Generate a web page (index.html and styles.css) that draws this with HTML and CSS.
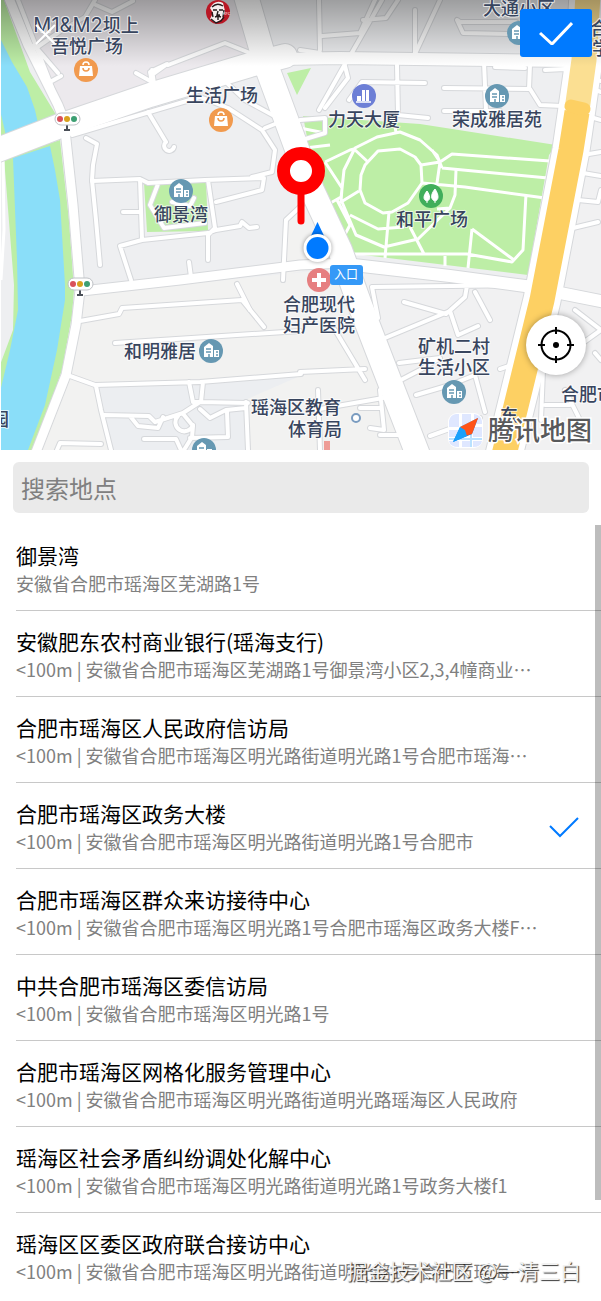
FILE: index.html
```html
<!DOCTYPE html>
<html lang="zh-CN">
<head>
<meta charset="utf-8">
<meta name="viewport" content="width=device-width, initial-scale=1">
<title>选择位置</title>
<link rel="stylesheet" href="styles.css">
</head>
<body>
<main class="page">
  <section class="map" aria-label="地图">
    <svg class="map-canvas" viewBox="0 0 601 450" preserveAspectRatio="xMidYMid slice">
      <defs>
        <g id="lanes">
          <path d="M18 0L50 82L61 76M50 82L58 105M26 45L36 48L62 30L85 17L95 0M96 5L112 12L133 1M34 45L58 73"/>
          <path d="M136 73L152 82L150 72L167 64L153 74M168 65L225 43L250 53M152 70L155 90"/>
          <path d="M72 135L200 97L228 108L262 130L275 150L272 172L252 177M148 112L166 142M86 138L97 144L93 165L92 180L96 220L100 265M166 142A5 5 0 1 0 174 147M228 84L245 100L278 118M265 128L280 122"/>
          <path d="M92 181L140 179L148 183L205 180L264 178L262 190L216 202M140 179L142 240L120 246L131 280M142 240L208 233L216 230L240 226L242 222L249 228L257 227M208 180L215 228L208 235L208 260M123 212L141 212M158 184L150 205L164 228L205 223M172 202L190 206L194 198"/>
          <path d="M283 280L286 220L302 205M189 262L191 277M237 284L250 310"/>
          <path d="M80 321L119 314L122 308L242 300L264 327M115 343L300 331M70 376L95 385L200 382L301 374M96 386L101 410L111 450M104 415L149 416L155 422L183 413L200 402L248 403M189 382L193 402L201 402L203 382M130 416L138 426L158 428L163 417M184 415L193 426L192 437L184 450M178 416A9 9 0 1 0 193 425M200 409L210 418L226 410L246 408M227 412L228 437L190 438M246 402L248 450M144 439L176 439L181 450M57 450L60 443L101 444"/>
          <path d="M319 0L320 50M322 36L360 33L375 0M350 56L382 0M398 0L386 18L363 20M415 54L440 0M415 10V54M300 50L320 53M457 20L463 33L516 34L516 22L460 22Z"/>
          <path d="M344 62L348 78L325 108M345 64L319 110M349 100L362 82L425 83M397 65L398 115L428 118M444 88L530 89L540 105L563 106M444 111L500 111M484 62L486 110M530 65L529 89M495 67L525 68"/>
          <path d="M300 120L325 118L325 133L302 140M545 70L565 69L575 75L601 81M590 88L601 92M587 116L601 120M583 155L601 152M583 173L601 176M578 200L598 202L601 190M573 228L598 222M594 0V60L601 62"/>
          <path d="M378 318L372 287L520 285M404 302L446 314L465 297L468 280M385 338L450 311L458 335L478 326M399 363L440 358L420 370L395 383M416 395L450 385L475 375L485 412M430 436L480 418M500 369L515 364M475 292L490 320M300 372L365 369M335 330L365 380M314 410L383 398M380 390L384 430L370 428M360 408H380M320 450L318 390M380 435L398 435M541 420L543 370L549 340M580 345L601 330M595 353L601 360M545 405H570M575 310L601 330M565 390L585 430"/>
        </g>
        <g id="streets">
          <path d="M8 -4L28 45L58 105L66 125"/>
          <path d="M65 130L73 205L80 290L76 325L66 375L36 452"/>
          <path d="M82 291L180 280L300 265L345 263"/>
        </g>
        <g id="avenues">
          <path d="M345 264L450 276L525 286L605 302"/>
          <path d="M280 59L340 58L570 61"/>
        </g>
        <g id="arterials">
          <path d="M-5 151L65 124L150 95L250 65L285 56"/>
          <path d="M246 -4L266 65L290 130L312 190L340 250L360 305L420 460"/>
        </g>
        <path id="highway" d="M588 -5L584 60L571 150L542 300L504 455"/>
        <g id="homes">
          <circle r="12" fill="#6698b2"/>
          <path d="M-7 6V-4L-2 -8L2 -5V6ZM3 -1H8V6H3Z" fill="#fff"/>
          <path d="M-5 -2H0M-5 1H0M-2 3V6M5 1H7M5 4H7" stroke="#6698b2" stroke-width="1.5"/>
        </g>
        <g id="shop">
          <circle r="12" fill="#f19a4e"/>
          <path d="M-6 -4H6L7 6H-7Z" fill="#fff"/>
          <path d="M-3 -5A3 3 0 0 1 3 -5" fill="none" stroke="#fff" stroke-width="1.5"/>
          <path d="M-3 -2A3 3 0 0 0 3 -2" fill="none" stroke="#f19a4e" stroke-width="1.5"/>
        </g>
        <g id="signal">
          <path d="M0 5V11M-3 11H3" stroke="#4a4f57" stroke-width="2"/>
          <rect x="-12" y="-6" width="25" height="12" rx="6" fill="#fff" stroke="#bfc2c6"/>
          <circle cx="-7" r="3" fill="#d9515a"/><circle r="3" fill="#d9a11d"/><circle cx="7" r="3" fill="#3d9f72"/>
        </g>
        <linearGradient id="shade" x2="0" y2="1">
          <stop offset="0" stop-opacity=".34"/><stop offset="1" stop-opacity="0"/>
        </linearGradient>
      </defs>

      <rect width="601" height="450" fill="#eeeff1"/>
      <path d="M10 0H240L260 60L65 122Z" fill="#ece9ed"/>
      <path d="M80 295L345 268L412 450H40L75 350ZM283 275L286 220L305 190L345 262Z" fill="#f2f2f1"/>
      <path d="M97 387L300 376L245 400V450H112Z" fill="#eceef1"/>
      <path d="M350 270L525 290L490 450H420ZM595 0H601V450H520Z" fill="#f1f1f2"/>

      <path class="grass" d="M0 0H4L30 72L58 118L0 140ZM4 158L60 140L69 220L74 290L72 315L62 370L34 450H0V365L13 330L14 285Z"/>
      <path class="water" d="M0 38L12 62L27 87L35 110L39 128L7 140L0 110ZM13 158L50 146L55 170L60 200L65 285L65 300L57 350L45 405L28 450H0V392L10 350L18 310L17 260Z"/>
      <path class="lane-white" d="M3 158L4 230L1 280"/>
      <path class="grass" d="M287 73L311 68L297 95ZM144 183L206 180L208 231L147 232ZM303 116L420 124L556 145L549 155L528 275L347 253L315 180Z"/>

      <g class="park-path">
        <path d="M365 165L378 151L400 149L415 157L421 165L422 183L408 203L392 212L383 213L365 203L360 190L361 175Z"/>
        <path d="M325 162L350 150L354 149L368 162M325 162L342 188L341 202L359 191M327 205L341 197M342 202L356 235L384 247L418 239L450 208L455 195L456 170M350 215L378 229L404 227M337 200L350 225L343 238M389 212L385 258M410 227L424 254M341 198L344 170L355 148L377 137L400 132L420 140L437 155L442 168M421 165L440 162L452 154L550 161M442 168L548 178M440 162L437 183M422 183L465 187L545 198M394 118L396 133M345 254L467 254L512 262L523 250L526 194M472 229L514 260M472 229L468 268M445 256V266M437 209L450 208M432 150L440 162M300 128L325 133V118M305 148L330 145"/>
      </g>

      <use href="#lanes" class="edge lane-edge"/>
      <use href="#streets" class="edge street-edge"/>
      <use href="#avenues" class="edge avenue-edge"/>
      <use href="#arterials" class="edge arterial-edge"/>
      <use href="#highway" class="edge highway-edge"/>
      <use href="#lanes" class="road lane-road"/>
      <use href="#streets" class="road street-road"/>
      <use href="#avenues" class="road avenue-road"/>
      <use href="#arterials" class="road arterial-road"/>
      <use href="#highway" class="road highway-road"/>
      <path class="expressway-light" d="M588 -5L584 60L577 110"/>
      <path class="expressway" d="M577 112L571 150L542 300L504 455"/>
      <path class="expressway-cap" d="M571 106L584 109"/>

      <rect width="601" height="66" fill="url(#shade)"/>

      <use href="#shop" x="86" y="70"/>
      <use href="#shop" x="221" y="120"/>
      <use href="#homes" x="181" y="191"/>
      <use href="#homes" x="211" y="351"/>
      <use href="#homes" x="204" y="450"/>
      <use href="#homes" x="497" y="96"/>
      <use href="#homes" x="519" y="33"/>
      <use href="#homes" x="454" y="392"/>
      <use href="#signal" x="67" y="119"/>
      <use href="#signal" x="80" y="284"/>
      <g transform="translate(364 96)">
        <circle r="12" fill="#6d7fd6"/>
        <path d="M-7 5V0H-3V5M-2 5V-6H1V5M2 5V-6H5V5" fill="#fff"/><path d="M-8 6H7" stroke="#fff" stroke-width="1.5"/>
      </g>
      <g transform="translate(431 196)">
        <circle r="12" fill="#41ae5b"/>
        <path d="M-4 -5C-8 0 -8 4 -4 5C0 4 -1 -1 -4 -5M4 -7C-1 -1 0 4 4 5C8 4 8 -1 4 -7M-4 5V7M4 5V7" fill="#fff" stroke="#fff"/>
      </g>
      <g transform="translate(218 12)">
        <circle r="12" fill="#b91725"/>
        <path d="M-8 -4Q-3 -13 5 -9L7 -1L4 7L-2 11L-8 7L-5 1Z" fill="#f5eeee"/>
        <path d="M-6 -5Q-1 -10 5 -6M-5 -2H-1M1 -2H5M0 -1L-1 3H2M-3 5L0 4L3 5M0 5V8M-7 7L-2 11L3 9L6 5M-6 0L-5 5M6 -2L5 5" fill="none" stroke="#251b1d" stroke-width="1.4"/>
        <text x="5" y="3" class="brand">KFC</text>
      </g>
      <g transform="translate(319 280)">
        <circle r="12" fill="#e67f80"/><path d="M-7 0H7M0 -7V7" stroke="#fff" stroke-width="4"/>
      </g>
      <circle cx="356" cy="418" r="4" fill="#fff" stroke="#7a9cc0" stroke-width="2"/>
      <path d="M324 441H330V450H324Z" fill="#ee9d97"/>

      <g class="place">
        <text x="86" y="32"><tspan class="latin">M1&amp;M2</tspan>坝上</text><text x="87" y="53">吾悦广场</text>
        <text x="222" y="102">生活广场</text>
        <text x="364" y="126">力天大厦</text>
        <text x="497" y="126">荣成雅居苑</text>
        <text x="519" y="15">大通小区</text>
        <text x="608" y="35">合肥</text><text x="601" y="55">学</text>
        <text x="181" y="221">御景湾</text>
        <text x="432" y="226">和平广场</text>
        <text x="160" y="358">和明雅居</text>
        <text x="319" y="311">合肥现代</text><text x="319" y="332">妇产医院</text>
        <text x="454" y="353">矿机二村</text><text x="454" y="374">生活小区</text>
        <text x="296" y="414">瑶海区教育</text><text x="315" y="436">体育局</text>
        <text x="588" y="401">合肥市</text>
        <text x="0" y="426">园</text>
        <text x="509" y="422">东</text>
      </g>

      <path d="M317.500 222L326 240H309Z" fill="#007aff"/>
      <circle cx="317.500" cy="248" r="14" fill="#fff" class="dot-halo"/>
      <circle cx="317.500" cy="248" r="11" fill="#007aff"/>
      <rect x="330" y="265" width="33" height="20" rx="3" fill="#3599f7"/>
      <text x="346" y="279" class="entrance">入口</text>

      <g transform="translate(448 413)">
        <rect width="35" height="35" rx="9" fill="#fff"/>
        <path d="M1 14V8Q2 2 8 1H11V14ZM14 1H23V11L14 13ZM26 1Q33 2 34 8V11H26ZM1 17H11V24H1ZM25 14H34V24H25ZM1 28H11V34Q2 34 1 28ZM14 28H22V34H14ZM25 28H34Q33 34 25 34Z" fill="#dfe7ff"/>
        <path d="M23 12V34M1 26H34" stroke="#b9e1ff" stroke-width="2"/>
        <path d="M30 5L12 14L5 29Z" fill="#158df5"/>
        <path d="M30 5L24 21L5 29Z" fill="#0d7af0"/>
        <path d="M30 5L12 14L17 23Z" fill="#ff7430"/>
        <path d="M30 5L24 21L17 23L13 14Z" fill="#ff5319"/>
        <path d="M5 29L12 14L17 17L19 23Z" fill="#1aa0fb"/>
      </g>
      <text x="540" y="440" class="map-brand">腾讯地图</text>
      <path d="M0 0H1V450H0Z" fill="#fff"/>
    </svg>

    <svg class="pin" viewBox="0 0 48 78" aria-hidden="true">
      <path d="M24 40V74" stroke="#f00" stroke-width="7" stroke-linecap="round"/>
      <circle cx="24" cy="24" r="17.500" fill="#fff" stroke="#f00" stroke-width="13"/>
    </svg>
    <button class="close" type="button" aria-label="关闭">
      <svg viewBox="0 0 22 22"><path d="M1 1L20 20M20 1L1 20"/></svg>
    </button>
    <button class="confirm" type="button" aria-label="确定">
      <svg viewBox="0 0 34 24"><path d="M1 12L13 23L33 2"/></svg>
    </button>
    <button class="locate" type="button" aria-label="定位">
      <svg viewBox="0 0 36 36"><circle cx="18" cy="18" r="14.500"/><path d="M18 0V7M18 29V36M0 18H7M29 18H36"/><circle class="core" cx="18" cy="18" r="3"/></svg>
    </button>
  </section>

  <form class="search">
    <input class="search-input" type="search" aria-label="搜索地点" placeholder="搜索地点">
  </form>

  <section class="results">
    <ul class="list">
      <li class="item"><h2 class="name">御景湾</h2><p class="address">安徽省合肥市瑶海区芜湖路1号</p></li>
      <li class="item"><h2 class="name">安徽肥东农村商业银行(瑶海支行)</h2><p class="address">&lt;100m | 安徽省合肥市瑶海区芜湖路1号御景湾小区2,3,4幢商业…</p></li>
      <li class="item"><h2 class="name">合肥市瑶海区人民政府信访局</h2><p class="address">&lt;100m | 安徽省合肥市瑶海区明光路街道明光路1号合肥市瑶海…</p></li>
      <li class="item selected"><h2 class="name">合肥市瑶海区政务大楼</h2><p class="address">&lt;100m | 安徽省合肥市瑶海区明光路街道明光路1号合肥市</p>
        <svg class="tick" viewBox="0 0 30 22" aria-label="已选择"><path d="M1 10L11 20L29 2"/></svg></li>
      <li class="item"><h2 class="name">合肥市瑶海区群众来访接待中心</h2><p class="address">&lt;100m | 安徽省合肥市瑶海区明光路1号合肥市瑶海区政务大楼F…</p></li>
      <li class="item"><h2 class="name">中共合肥市瑶海区委信访局</h2><p class="address">&lt;100m | 安徽省合肥市瑶海区明光路1号</p></li>
      <li class="item"><h2 class="name">合肥市瑶海区网格化服务管理中心</h2><p class="address">&lt;100m | 安徽省合肥市瑶海区明光路街道明光路瑶海区人民政府</p></li>
      <li class="item"><h2 class="name">瑶海区社会矛盾纠纷调处化解中心</h2><p class="address">&lt;100m | 安徽省合肥市瑶海区明光路街道明光路1号政务大楼f1</p></li>
      <li class="item"><h2 class="name">瑶海区区委区政府联合接访中心</h2><p class="address">&lt;100m | 安徽省合肥市瑶海区明光路街道明光路1号合肥市瑶海…</p></li>
    </ul>
    <div class="scroll-thumb"></div>
    <p class="credit">掘金技术社区 @一清三白</p>
  </section>
</main>
</body>
</html>
```
FILE: styles.css
```css
* {
  box-sizing: border-box;
}

body {
  margin: 0;
  background: #fff;
  color: #000;
  font-family: "Noto Sans CJK SC", "Noto Sans", sans-serif;
}

button {
  padding: 0;
  border: 0;
  background: none;
  cursor: pointer;
}

.page {
  display: flex;
  flex-direction: column;
  min-height: 100vh;
}

/* Map */
.map {
  position: relative;
  height: 450px;
  overflow: hidden;
}

.map-canvas {
  display: block;
  width: 100%;
  height: 100%;
}

.grass { fill: #bdeea6; }
.water { fill: #8adef9; }

.lane-white,
.park-path {
  fill: none;
  stroke: #fff;
  stroke-width: 3px;
  stroke-linejoin: round;
}

.edge,
.road {
  fill: none;
  stroke-linejoin: round;
  stroke-linecap: round;
}

.edge { stroke: #d6d8db; }
.road { stroke: #fff; }
.lane-edge { stroke-width: 6px; }
.lane-road { stroke-width: 4px; }
.street-edge { stroke-width: 11px; }
.street-road { stroke-width: 9px; }
.avenue-edge { stroke-width: 14px; }
.avenue-road { stroke-width: 12px; }
.arterial-edge { stroke-width: 26px; }
.arterial-road { stroke-width: 24px; }
.highway-edge { stroke-width: 39px; }
.highway-road { stroke-width: 37px; }

.expressway,
.expressway-light,
.expressway-cap {
  fill: none;
  stroke: #fdd063;
  stroke-width: 25px;
}

.expressway-light { stroke: #fbdf92; }

.expressway-cap {
  stroke-width: 13px;
  stroke-linecap: round;
}

.place {
  fill: #38455e;
  stroke: rgba(255, 255, 255, .7);
  stroke-width: 2px;
  stroke-linejoin: round;
  paint-order: stroke;
  font-size: 18px;
  font-weight: 500;
  text-anchor: middle;
}

.latin {
  font-family: Inter, sans-serif;
  font-size: 20px;
  font-weight: 400;
}

.brand {
  fill: #fff;
  font-size: 4px;
}

.entrance {
  fill: #fff;
  font-size: 12px;
  text-anchor: middle;
}

.map-brand {
  fill: #58595b;
  stroke: #fff;
  stroke-width: 3px;
  paint-order: stroke;
  font-size: 26px;
  font-weight: 500;
  text-anchor: middle;
}

.dot-halo {
  filter: drop-shadow(0 0 2px rgba(0, 0, 0, .4));
}

.pin {
  position: absolute;
  left: 50%;
  bottom: 50%;
  width: 48px;
  height: 78px;
  transform: translateX(-50%);
}

.close {
  position: absolute;
  top: 24px;
  left: 35px;
  width: 22px;
  height: 22px;
}

.close svg {
  display: block;
  fill: none;
  stroke: #fff;
  stroke-width: 2px;
}

.confirm {
  position: absolute;
  top: 9px;
  right: 9px;
  display: grid;
  place-items: center;
  width: 72px;
  height: 48px;
  border-radius: 3px;
  background: #007aff;
}

.confirm svg {
  width: 34px;
  height: 24px;
  fill: none;
  stroke: #fff;
  stroke-width: 3px;
}

.locate {
  position: absolute;
  right: 15px;
  bottom: 75px;
  display: grid;
  place-items: center;
  width: 60px;
  height: 60px;
  border-radius: 50%;
  background: #fff;
  box-shadow: 0 0 6px rgba(0, 0, 0, .35);
}

.locate svg {
  width: 36px;
  height: 36px;
  fill: none;
  stroke: #000;
  stroke-width: 2px;
}

.locate .core {
  fill: #000;
  stroke: none;
}

/* Search */
.search {
  padding: 12px 12px 12px 13px;
}

.search-input {
  display: block;
  width: 100%;
  height: 51px;
  padding: 0 8px;
  border: 0;
  border-radius: 6px;
  background: #eaeaea;
  color: #000;
  font-family: inherit;
  font-size: 24px;
  outline: 0;
  appearance: none;
}

.search-input::placeholder {
  color: #808080;
}

/* Results */
.results {
  position: relative;
  flex: 1;
}

.list {
  margin: 0;
  padding: 0 0 0 16px;
  list-style: none;
}

.item {
  display: grid;
  grid-template-columns: 1fr 46px;
  align-items: center;
  padding: 15px 6px 13px 0;
  border-bottom: 1px solid #c8c8c8;
}

.item:last-child {
  border-bottom: 0;
}

.name,
.address {
  grid-column: 1;
  margin: 0;
  overflow: hidden;
  white-space: nowrap;
  text-overflow: ellipsis;
  font-weight: 400;
}

.name {
  font-size: 21px;
  line-height: 30px;
}

.address {
  color: #808080;
  font-size: 18px;
  line-height: 27px;
}

.tick {
  grid-area: 1 / 2 / 3 / 3;
  width: 30px;
  height: 22px;
  fill: none;
  stroke: #007aff;
  stroke-width: 2px;
}

.scroll-thumb {
  position: absolute;
  top: 0;
  right: 0;
  width: 6px;
  height: 87%;
  background: rgba(0, 0, 0, .26);
}

.credit {
  position: absolute;
  right: 20px;
  bottom: 16px;
  margin: 0;
  color: #f2f2f2;
  font-size: 21px;
  line-height: 30px;
  text-shadow: 1px 1px 1px rgba(0, 0, 0, .8);
}
```
